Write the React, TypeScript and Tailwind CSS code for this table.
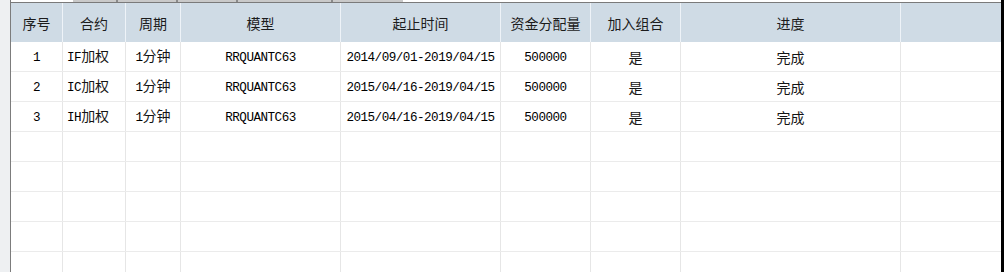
const columns = ['序号', '合约', '周期', '模型', '起止时间', '资金分配量', '加入组合', '进度', ''];

const rows = [
  { id: '1', code: 'IF', range: '2014/09/01-2019/04/15' },
  { id: '2', code: 'IC', range: '2015/04/16-2019/04/15' },
  { id: '3', code: 'IH', range: '2015/04/16-2019/04/15' },
];

const grid = 'grid shrink-0 grid-cols-[52px_63px_55px_160px_160px_90px_90px_220px_100px]';
const cjk = "font-['Noto_Sans_CJK_SC',sans-serif]";
const mono = "font-['Liberation_Mono','DejaVu_Sans_Mono',monospace] text-[12.6px] tracking-[-0.5px] text-black";

function Mono({ children }: { children: string }) {
  return <span className={mono}>{children}</span>;
}

function Cell({ children, left, last }: { children?: React.ReactNode; left?: boolean; last?: boolean }) {
  return (
    <div
      className={`flex items-center h-full ${left ? 'justify-start pl-[4px]' : 'justify-center'} ${
        last ? '' : 'border-r border-[#e6e6e6]'
      }`}
    >
      <span className="leading-[16px]">{children}</span>
    </div>
  );
}

export default function App() {
  const empty = 8 - rows.length;

  return (
    <div className={`flex w-[1004px] h-[272px] overflow-hidden bg-white text-[14px] leading-none text-[#141414] ${cjk}`}>
      {/* left gutter */}
      <div className="w-[10px] shrink-0 bg-[#eef0f2] border-r border-[#7c7c7c] box-content" />

      <div className="flex flex-col w-[990px] shrink-0">
        {/* bottom edge of the tab strip */}
        <div className="flex h-[2px] shrink-0 bg-white">
          <div className="w-[62px]" />
          <div className="w-[45px] bg-[#c9c9c9] border-r-2 border-[#8a8a8a]" />
          <div className="w-[60px] bg-[#c9c9c9] border-r-2 border-[#8a8a8a]" />
          <div className="w-[60px] bg-[#c9c9c9] border-r-2 border-[#8a8a8a]" />
          <div className="w-[95px] bg-[#c9c9c9] border-r-2 border-[#8a8a8a]" />
          <div className="w-[70px] bg-[#c9c9c9]" />
        </div>
        <div className="h-px shrink-0 bg-[#7a7a7a]" />

        {/* header */}
        <div className={`${grid} h-[39px] bg-[#cfdbe5] text-[#1c1c1c]`}>
          {columns.map((c, i) => (
            <div
              key={i}
              className={`flex items-center justify-center h-full ${
                i < columns.length - 1 ? 'border-r border-[#eef3f8]' : ''
              }`}
            >
              {c}
            </div>
          ))}
        </div>

        {/* data rows */}
        {rows.map((r) => (
          <div key={r.id} className={`${grid} h-[30px] border-b border-[#ebebeb]`}>
            <Cell>
              <Mono>{r.id}</Mono>
            </Cell>
            <Cell left>
              <Mono>{r.code}</Mono>
              加权
            </Cell>
            <Cell>
              <Mono>1</Mono>
              分钟
            </Cell>
            <Cell>
              <Mono>RRQUANTC63</Mono>
            </Cell>
            <Cell>
              <Mono>{r.range}</Mono>
            </Cell>
            <Cell>
              <Mono>500000</Mono>
            </Cell>
            <Cell>是</Cell>
            <Cell>完成</Cell>
            <Cell last />
          </div>
        ))}

        {Array.from({ length: empty }).map((_, i) => (
          <div key={`e${i}`} className={`${grid} h-[30px] border-b border-[#ebebeb]`}>
            {columns.map((_, j) => (
              <Cell key={j} last={j === columns.length - 1} />
            ))}
          </div>
        ))}
      </div>

      {/* right edge */}
      <div className="flex-1 bg-black" />
    </div>
  );
}
